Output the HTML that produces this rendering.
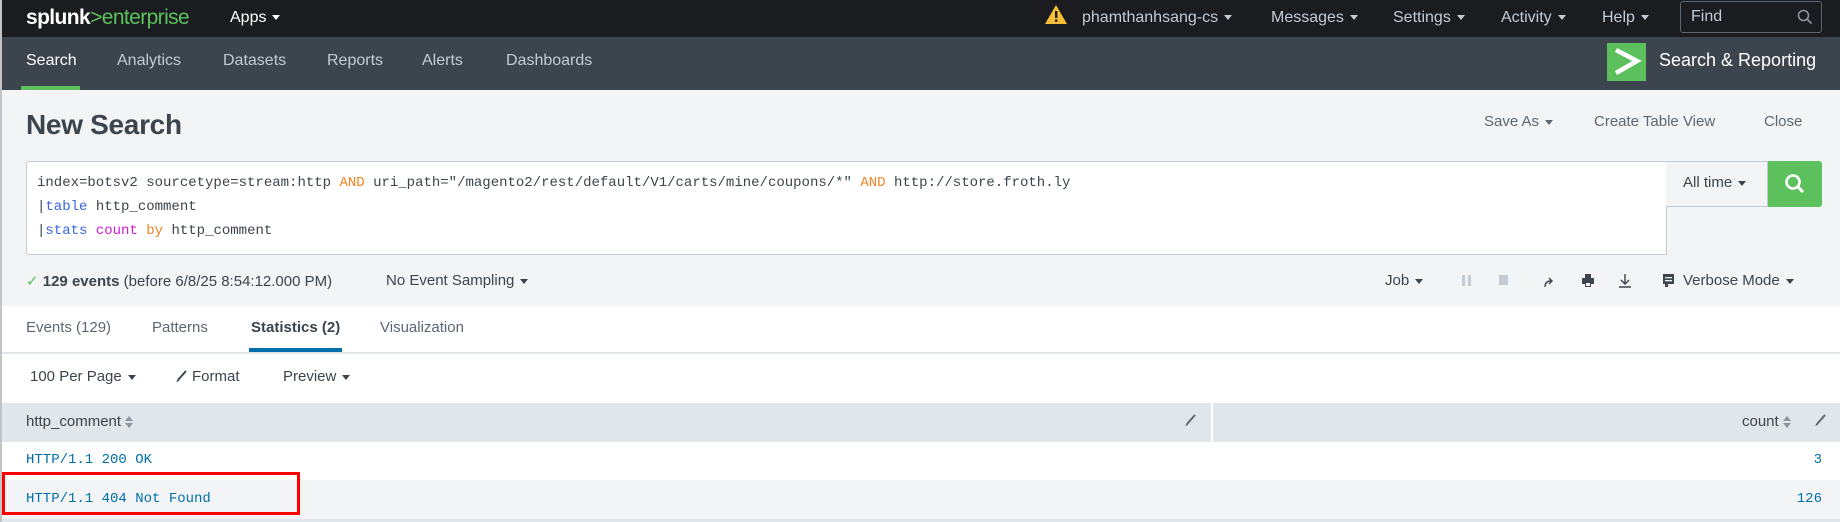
<!DOCTYPE html>
<html><head><meta charset="utf-8"><style>
*{margin:0;padding:0;box-sizing:border-box}
body{width:1840px;height:522px;overflow:hidden;background:#f2f4f5;font-family:"Liberation Sans",sans-serif;position:relative;color:#3c444d}
.a{position:absolute;white-space:nowrap}
.tri{display:inline-block;width:0;height:0;border-left:4px solid transparent;border-right:4px solid transparent;border-top:5px solid currentColor;vertical-align:middle;margin-left:6px}
.mono{font-family:"Liberation Mono",monospace;font-size:14px}
.srt{display:inline-block;vertical-align:middle;margin-left:4px}
</style></head><body>
<div class="a" style="left:0;top:0;width:2px;height:522px;background:#c3c3c3;z-index:5"></div>
<!-- top bar -->
<div class="a" style="left:0;top:0;width:1840px;height:37px;background:#1a1c20"></div>
<div class="a" style="left:26px;top:6px;font-size:21px;font-weight:bold;color:#fff;letter-spacing:-0.6px">splunk<span style="color:#5cc05c;font-weight:normal">&gt;enterprise</span></div>
<div class="a" style="left:230px;top:9px;font-size:16px;color:#fff">Apps<span class="tri"></span></div>
<svg class="a" style="left:1044px;top:4px" width="24" height="21" viewBox="0 0 24 21"><path d="M12 1 L23 20 L1 20 Z" fill="#f8be34"/><rect x="11" y="7" width="2.4" height="7" fill="#1a1c20"/><rect x="11" y="15.5" width="2.4" height="2.4" fill="#1a1c20"/></svg>
<div class="a" style="left:1082px;top:9px;font-size:16px;color:#c3cbd4">phamthanhsang-cs<span class="tri"></span></div>
<div class="a" style="left:1271px;top:9px;font-size:16px;color:#c3cbd4">Messages<span class="tri"></span></div>
<div class="a" style="left:1393px;top:9px;font-size:16px;color:#c3cbd4">Settings<span class="tri"></span></div>
<div class="a" style="left:1501px;top:9px;font-size:16px;color:#c3cbd4">Activity<span class="tri"></span></div>
<div class="a" style="left:1602px;top:9px;font-size:16px;color:#c3cbd4">Help<span class="tri"></span></div>
<div class="a" style="left:1680px;top:1px;width:142px;height:32px;border:1px solid #5c6773;border-radius:3px"></div>
<div class="a" style="left:1691px;top:8px;font-size:16px;color:#c3cbd4">Find</div>
<svg class="a" style="left:1797px;top:9px" width="16" height="16" viewBox="0 0 16 16"><circle cx="6.5" cy="6.5" r="5" stroke="#8c95a0" stroke-width="1.6" fill="none"/><path d="M10 10 L14.5 14.5" stroke="#8c95a0" stroke-width="1.8"/></svg>
<!-- nav -->
<div class="a" style="left:0;top:37px;width:1840px;height:53px;background:#3c444d"></div>
<div class="a" style="left:21px;top:86px;width:59px;height:4px;background:#5cc05c"></div>
<div class="a" style="left:26px;top:52px;font-size:16px;color:#fff">Search</div>
<div class="a" style="left:117px;top:52px;font-size:16px;color:#c3cbd4">Analytics</div>
<div class="a" style="left:223px;top:52px;font-size:16px;color:#c3cbd4">Datasets</div>
<div class="a" style="left:327px;top:52px;font-size:16px;color:#c3cbd4">Reports</div>
<div class="a" style="left:422px;top:52px;font-size:16px;color:#c3cbd4">Alerts</div>
<div class="a" style="left:506px;top:52px;font-size:16px;color:#c3cbd4">Dashboards</div>
<div class="a" style="left:1607px;top:43px;width:39px;height:38px;background:#5cc05c"></div>
<svg class="a" style="left:1607px;top:43px" width="39" height="38" viewBox="0 0 39 38"><path d="M9 7 L30 18 L9 30" stroke="#fff" stroke-width="4.5" fill="none"/></svg>
<div class="a" style="left:1659px;top:50px;font-size:18px;color:#fff">Search &amp; Reporting</div>
<!-- title -->
<div class="a" style="left:26px;top:109px;font-size:28px;color:#3c444d;font-weight:bold;letter-spacing:-0.3px">New Search</div>
<div class="a" style="left:1484px;top:113px;font-size:15px;color:#5c6773">Save As<span class="tri"></span></div>
<div class="a" style="left:1594px;top:113px;font-size:15px;color:#5c6773">Create Table View</div>
<div class="a" style="left:1764px;top:113px;font-size:15px;color:#5c6773">Close</div>
<!-- search box -->
<div class="a" style="left:26px;top:161px;width:1641px;height:94px;background:#fff;border:1px solid #c3cbd4;border-radius:3px 0 0 3px"></div>
<div class="a mono" style="left:37px;top:175px;color:#3c444d">index=botsv2 sourcetype=stream:http <span style="color:#f58220">AND</span> uri_path="/magento2/rest/default/V1/carts/mine/coupons/*" <span style="color:#f58220">AND</span> http://store.froth.ly</div>
<div class="a mono" style="left:37px;top:199px;color:#3c444d">|<span style="color:#3863e0">table</span> http_comment</div>
<div class="a mono" style="left:37px;top:223px;color:#3c444d">|<span style="color:#3863e0">stats</span> <span style="color:#d11bd1">count</span> <span style="color:#f58220">by</span> http_comment</div>
<div class="a" style="left:1666px;top:161px;width:102px;height:46px;background:#f2f4f5;border:1px solid #c3cbd4;border-left:none"></div>
<div class="a" style="left:1683px;top:174px;font-size:15px;color:#3c444d">All time<span class="tri"></span></div>
<div class="a" style="left:1768px;top:161px;width:54px;height:46px;background:#5cc05c;border-radius:0 3px 3px 0"></div>
<svg class="a" style="left:1784px;top:173px" width="22" height="22" viewBox="0 0 22 22"><circle cx="9" cy="9" r="6.5" stroke="#fff" stroke-width="2.6" fill="none"/><path d="M13.5 13.5 L19 19" stroke="#fff" stroke-width="3"/></svg>
<!-- status -->
<div class="a" style="left:26px;top:272px;font-size:15px;color:#3c444d"><span style="color:#5cc05c">✓</span> <b>129 events</b> (before 6/8/25 8:54:12.000 PM)</div>
<div class="a" style="left:386px;top:272px;font-size:15px;color:#3c444d">No Event Sampling<span class="tri"></span></div>
<div class="a" style="left:1385px;top:272px;font-size:15px;color:#3c444d">Job<span class="tri"></span></div>
<div class="a" style="left:1462px;top:275px;width:3px;height:11px;background:#c3cbd4"></div>
<div class="a" style="left:1468px;top:275px;width:3px;height:11px;background:#c3cbd4"></div>
<div class="a" style="left:1499px;top:275px;width:9px;height:10px;background:#c3cbd4"></div>
<svg class="a" style="left:1543px;top:276px" width="12" height="12" viewBox="0 0 12 12"><path d="M2 11 Q2 5 8 5 M6 2 L9 5 L6 8" stroke="#3c444d" stroke-width="1.4" fill="none"/></svg>
<svg class="a" style="left:1582px;top:274px" width="12" height="13" viewBox="0 0 12 13"><rect x="3" y="0" width="6" height="4" fill="#3c444d"/><rect x="0" y="4" width="12" height="6" fill="#3c444d"/><rect x="3" y="8" width="6" height="5" fill="#3c444d"/><rect x="4" y="9" width="4" height="3" fill="#f2f4f5"/></svg>
<svg class="a" style="left:1619px;top:274px" width="12" height="14" viewBox="0 0 12 14"><path d="M6 0 V10 M2 6 L6 10 L10 6 M0 13 H12" stroke="#3c444d" stroke-width="1.4" fill="none"/></svg>
<svg class="a" style="left:1663px;top:274px" width="11" height="13" viewBox="0 0 11 13"><rect x="0" y="0" width="11" height="10" fill="#3c444d"/><rect x="2" y="3" width="7" height="1.3" fill="#f2f4f5"/><rect x="2" y="6" width="7" height="1.3" fill="#f2f4f5"/><rect x="2" y="10" width="3" height="3" fill="#3c444d"/></svg>
<div class="a" style="left:1683px;top:272px;font-size:15px;color:#3c444d">Verbose Mode<span class="tri"></span></div>
<!-- tabs -->
<div class="a" style="left:0;top:306px;width:1840px;height:137px;background:#fff"></div>
<div class="a" style="left:0;top:352px;width:1840px;height:2px;background:#e1e6ea"></div>
<div class="a" style="left:26px;top:319px;font-size:15px;color:#5c6773">Events (129)</div>
<div class="a" style="left:152px;top:319px;font-size:15px;color:#5c6773">Patterns</div>
<div class="a" style="left:251px;top:319px;font-size:15px;color:#3c444d;font-weight:bold">Statistics (2)</div>
<div class="a" style="left:249px;top:348px;width:93px;height:4px;background:#006eaa"></div>
<div class="a" style="left:380px;top:319px;font-size:15px;color:#5c6773">Visualization</div>
<div class="a" style="left:30px;top:368px;font-size:15px;color:#3c444d">100 Per Page<span class="tri"></span></div>
<svg class="a" style="left:175px;top:370px" width="12" height="13" viewBox="0 0 12 13"><path d="M11 1 L3 10" stroke="#3c444d" stroke-width="2"/><path d="M3 9 L1 12 L4 11 Z" fill="#3c444d"/></svg>
<div class="a" style="left:192px;top:368px;font-size:15px;color:#3c444d">Format</div>
<div class="a" style="left:283px;top:368px;font-size:15px;color:#3c444d">Preview<span class="tri"></span></div>
<!-- table -->
<div class="a" style="left:0;top:403px;width:1840px;height:39px;background:#e1e6ea"></div>
<div class="a" style="left:1211px;top:403px;width:2px;height:39px;background:#fff"></div>
<div class="a" style="left:26px;top:413px;font-size:15px;color:#3c444d">http_comment<svg class="srt" width="8" height="12" viewBox="0 0 8 12"><path d="M4 0 L8 5 H0 Z M4 12 L8 7 H0 Z" fill="#8c95a0"/></svg></div>
<svg class="a" style="left:1184px;top:414px" width="12" height="13" viewBox="0 0 12 13"><path d="M11 1 L3 10" stroke="#5c6773" stroke-width="2"/><path d="M3 9 L1 12 L4 11 Z" fill="#5c6773"/></svg>
<div class="a" style="left:1742px;top:413px;font-size:15px;color:#3c444d">count<svg class="srt" width="8" height="12" viewBox="0 0 8 12"><path d="M4 0 L8 5 H0 Z M4 12 L8 7 H0 Z" fill="#8c95a0"/></svg></div>
<svg class="a" style="left:1814px;top:414px" width="12" height="13" viewBox="0 0 12 13"><path d="M11 1 L3 10" stroke="#5c6773" stroke-width="2"/><path d="M3 9 L1 12 L4 11 Z" fill="#5c6773"/></svg>
<div class="a" style="left:0;top:442px;width:1840px;height:38px;background:#fff"></div>
<div class="a" style="left:0;top:480px;width:1840px;height:39px;background:#f2f4f5"></div>
<div class="a" style="left:0;top:519px;width:1840px;height:3px;background:#e1e6ea"></div>
<div class="a mono" style="left:26px;top:452px;color:#006eaa">HTTP/1.1 200 OK</div>
<div class="a mono" style="right:18px;top:452px;color:#006eaa">3</div>
<div class="a mono" style="left:26px;top:491px;color:#006eaa">HTTP/1.1 404 Not Found</div>
<div class="a mono" style="right:18px;top:491px;color:#006eaa">126</div>
<div class="a" style="left:2px;top:472px;width:298px;height:43px;border:3px solid #f00"></div>
</body></html>
